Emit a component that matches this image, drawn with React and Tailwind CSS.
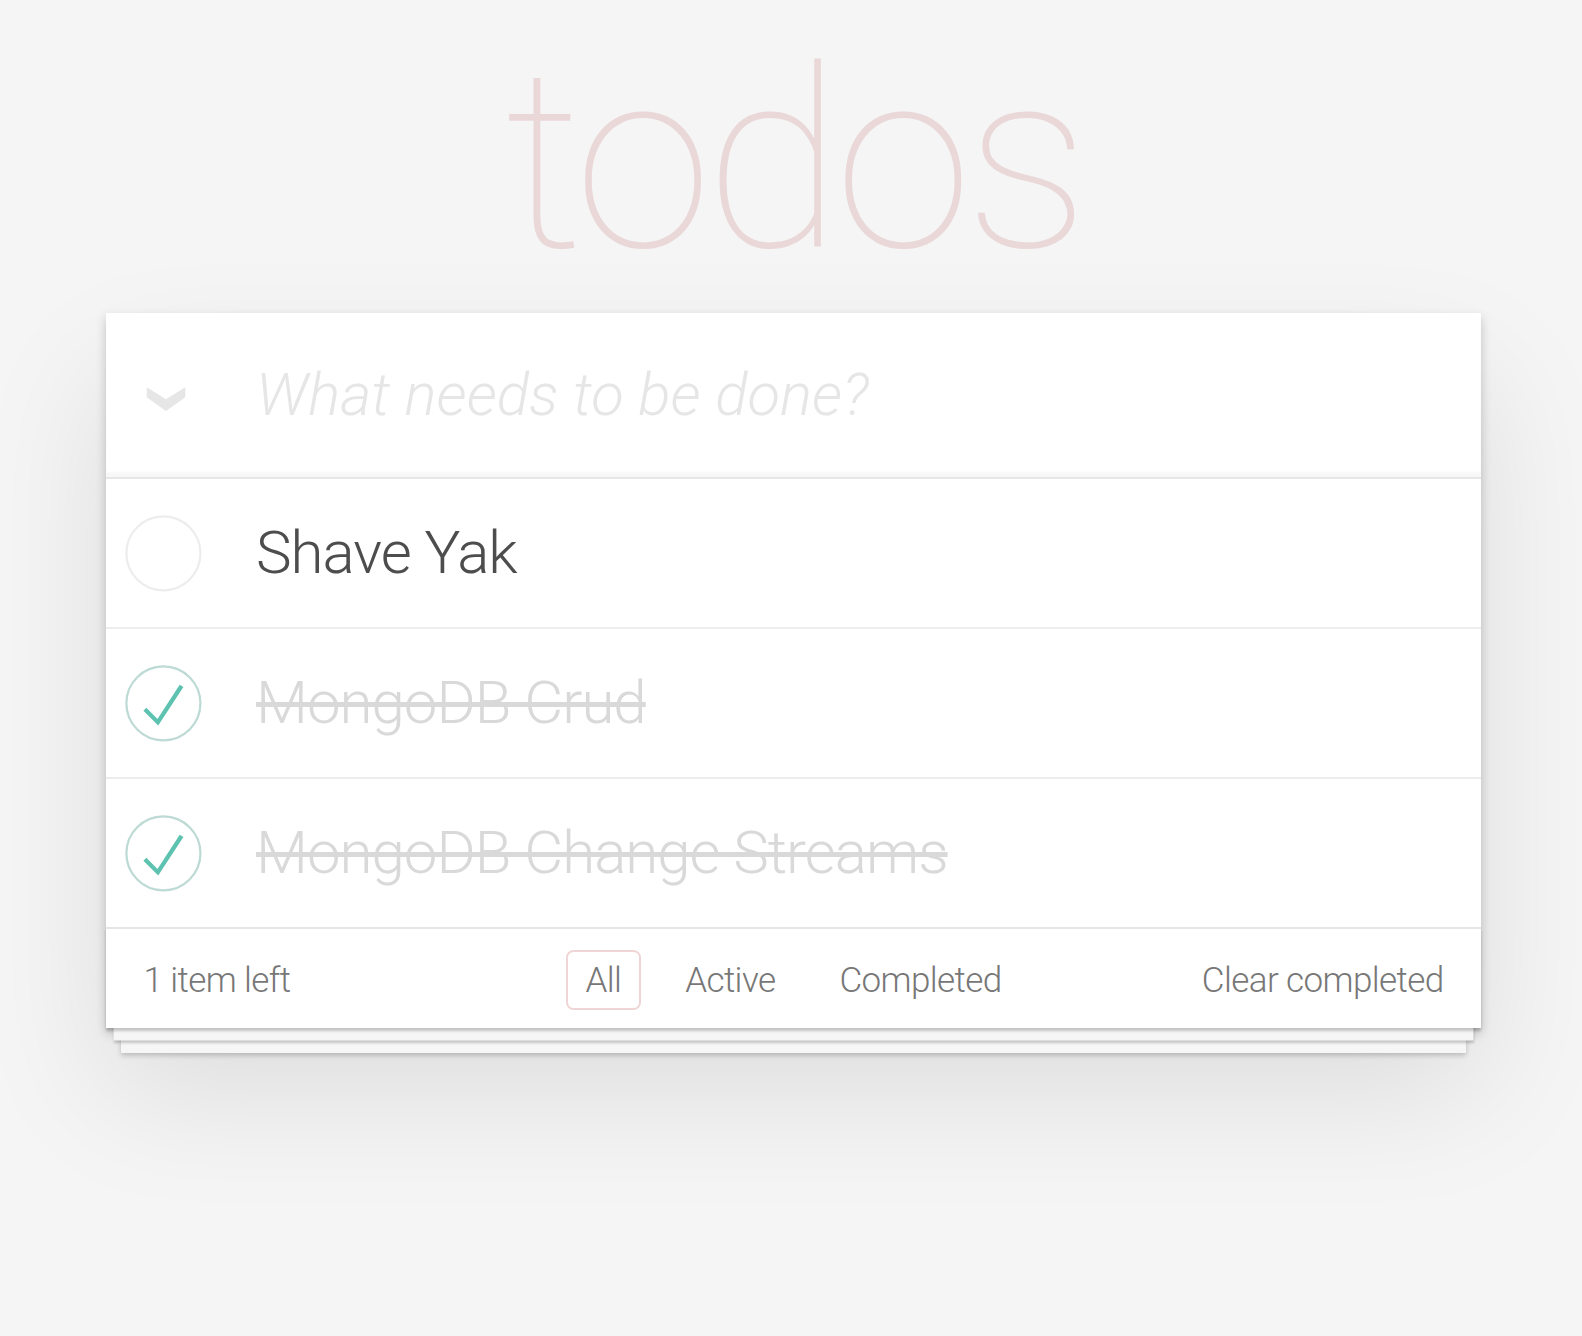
import React, { useState } from 'react';

const initialTodos = [
  { id: 1, title: 'Shave Yak', completed: false },
  { id: 2, title: 'MongoDB Crud', completed: true },
  { id: 3, title: 'MongoDB Change Streams', completed: true },
];

// same drawing the todomvc css uses as background for the toggle
function Toggle({ checked }) {
  return (
    <svg width="100" height="100" viewBox="-10 -18 100 135" className="shrink-0">
      <circle
        cx="50"
        cy="50"
        r="50"
        fill="none"
        stroke={checked ? '#bddad5' : '#ededed'}
        strokeWidth="3"
      />
      {checked && <path fill="#5dc2af" d="M72 25L42 71 27 56l-4 4 20 20 34-52z" />}
    </svg>
  );
}

function TodoItem({ todo, last }) {
  return (
    <li
      className={`flex items-center ${last ? 'h-[148px]' : 'h-[150px] border-b-2 border-[#ededed]'}`}
    >
      <Toggle checked={todo.completed} />
      <label
        className={`ml-[50px] text-[60px] leading-[72px] tracking-[-1px] ${
          todo.completed
            ? 'text-[#d9d9d9] line-through decoration-[5px]'
            : 'text-[#4d4d4d]'
        }`}
      >
        {todo.title}
      </label>
    </li>
  );
}

export default function App() {
  const [todos] = useState(initialTodos);
  const [filter, setFilter] = useState('all');
  const left = todos.filter((t) => !t.completed).length;

  return (
    <div className="min-h-[1336px] bg-[#f5f5f5] pl-[5px] pt-[37px] font-['Roboto','Helvetica_Neue',Arial,sans-serif] font-light">
      <div className="mx-auto w-[1375px]">
        <h1 className="h-[250px] text-center text-[250px] font-thin leading-[250px] tracking-[-7px] text-[rgba(175,47,47,0.15)]">
          todos
        </h1>

        <section className="mt-[26px] bg-white shadow-[0_5px_10px_0_rgba(0,0,0,0.2),0_62.5px_125px_0_rgba(0,0,0,0.1)]">
          <header className="flex h-[164px] items-center shadow-[inset_0_-5px_2.5px_rgba(0,0,0,0.03)]">
            <div className="flex w-[150px] shrink-0 pl-[40px] pt-[7px]">
              <svg width="40" height="26" viewBox="0 0 40 26">
                <polygon points="0.7,1.3 20,13.3 39.3,1.3 39.3,11.3 20,25 0.7,11.3" fill="#e6e6e6" />
              </svg>
            </div>
            <input
              className="flex-1 bg-transparent pr-[40px] text-[60px] font-light leading-[84px] text-[#4d4d4d] outline-none placeholder:italic placeholder:text-[#e6e6e6]"
              placeholder="What needs to be done?"
            />
          </header>

          <ul className="border-t-2 border-[#e6e6e6]">
            {todos.map((todo, i) => (
              <TodoItem key={todo.id} todo={todo} last={i === todos.length - 1} />
            ))}
          </ul>

          <footer className="grid h-[101px] grid-cols-[1fr_auto_1fr] items-center border-t-2 border-[#e6e6e6] px-[37.5px] pt-[3px] text-[35px] leading-[49px] tracking-[-0.6px] text-[#777] shadow-[0_2.5px_2.5px_rgba(0,0,0,0.2),0_20px_0_-7.5px_#f6f6f6,0_22.5px_2.5px_-7.5px_rgba(0,0,0,0.2),0_40px_0_-15px_#f6f6f6,0_42.5px_5px_-15px_rgba(0,0,0,0.2)]">
            <span className="text-left">
              {left} item left
            </span>
            <ul className="flex items-center gap-[25px]">
              {[
                ['all', 'All'],
                ['active', 'Active'],
                ['completed', 'Completed'],
              ].map(([key, label]) => (
                <li key={key}>
                  <a
                    href={'#/' + (key === 'all' ? '' : key)}
                    onClick={() => setFilter(key)}
                    className={`flex h-[60px] items-center rounded-[7.5px] border-2 px-[17.5px] ${
                      filter === key ? 'border-[rgba(175,47,47,0.2)]' : 'border-transparent'
                    }`}
                  >
                    {label}
                  </a>
                </li>
              ))}
            </ul>
            <button className="justify-self-end text-[35px] font-light tracking-[-0.6px] text-[#777]">
              Clear completed
            </button>
          </footer>
        </section>
      </div>
    </div>
  );
}
